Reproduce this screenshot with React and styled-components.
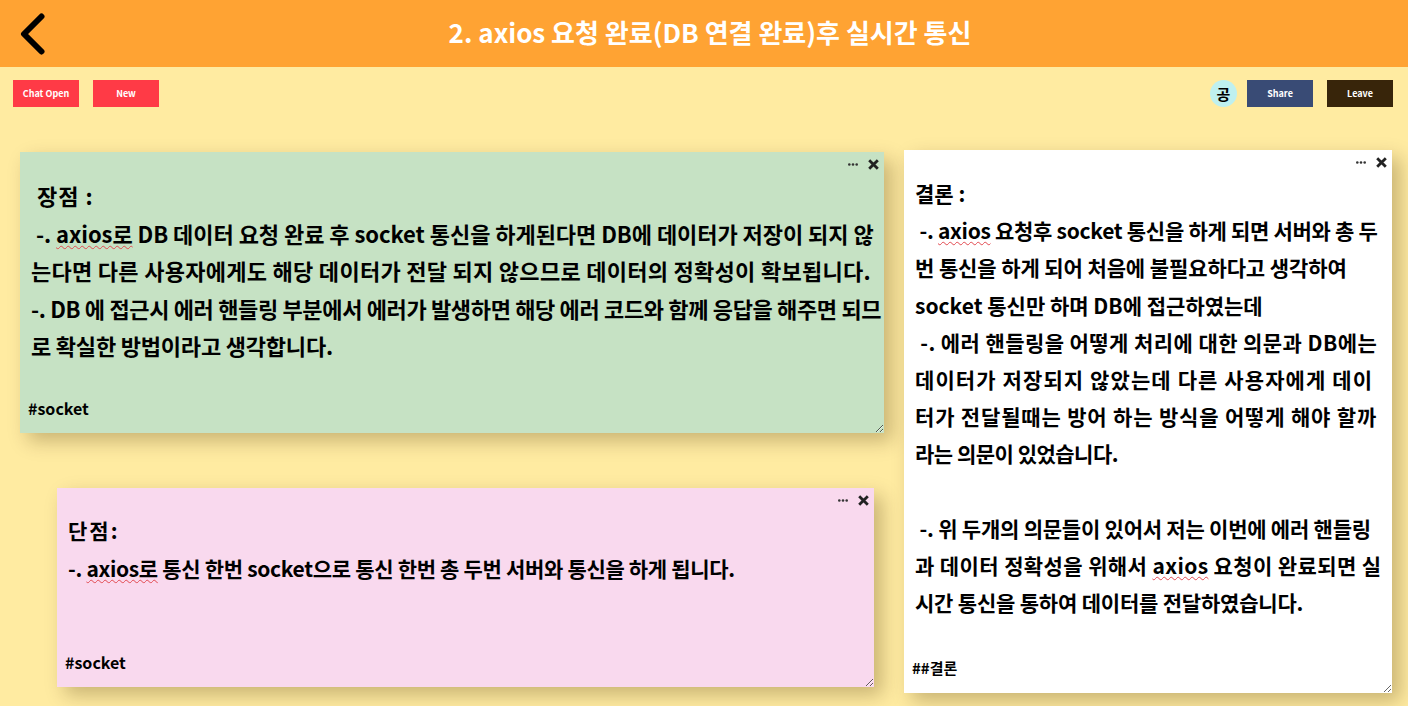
import React from 'react';
import styled, { createGlobalStyle } from 'styled-components';

// spacing = letter-spacing per line, the original font is a wider handwriting one
const notes = [
  {
    id: 'pros',
    left: 20, top: 152, width: 864, height: 281, color: '#c6e2c4',
    padTop: 25, size: 22, lineHeight: 37.6,
    tag: '#socket',
    spacing: [1, -0.05, 0.28, -0.35, -0.2],
    lines: [
      ' 장점 :',
      [' -. ', 'axios로', ' DB 데이터 요청 완료 후 socket 통신을 하게된다면 DB에 데이터가 저장이 되지 않'],
      '는다면 다른 사용자에게도 해당 데이터가 전달 되지 않으므로 데이터의 정확성이 확보됩니다.',
      '-. DB 에 접근시 에러 핸들링 부분에서 에러가 발생하면 해당 에러 코드와 함께 응답을 해주면 되므',
      '로 확실한 방법이라고 생각합니다.',
    ],
  },
  {
    id: 'cons',
    left: 57, top: 488, width: 817, height: 199, color: '#f9d9ee',
    padTop: 24, size: 21, lineHeight: 37.6,
    tag: '#socket',
    spacing: [2, -0.32],
    lines: [
      '단점:',
      ['-. ', 'axios로', ' 통신 한번 socket으로 통신 한번 총 두번 서버와 통신을 하게 됩니다.'],
    ],
  },
  {
    id: 'result',
    left: 904, top: 150, width: 488, height: 543, color: '#ffffff',
    padTop: 25, size: 21, lineHeight: 37.2,
    tag: '##결론',
    spacing: [0, -0.29, -0.1, 0, 0.42, 1.1, 0.82, -0.5, 0, -0.23, 0.39, -0.2],
    lines: [
      '결론 :',
      [' -. ', 'axios', ' 요청후 socket 통신을 하게 되면 서버와 총 두'],
      '번 통신을 하게 되어 처음에 불필요하다고 생각하여',
      'socket 통신만 하며 DB에 접근하였는데',
      ' -. 에러 핸들링을 어떻게 처리에 대한 의문과 DB에는',
      '데이터가 저장되지 않았는데 다른 사용자에게 데이',
      '터가 전달될때는 방어 하는 방식을 어떻게 해야 할까',
      '라는 의문이 있었습니다.',
      '\u00a0',
      ' -. 위 두개의 의문들이 있어서 저는 이번에 에러 핸들링',
      ['과 데이터 정확성을 위해서 ', 'axios', ' 요청이 완료되면 실'],
      '시간 통신을 통하여 데이터를 전달하였습니다.',
    ],
  },
];

const GlobalStyle = createGlobalStyle`
  html, body {
    margin: 0;
    padding: 0;
    height: 100%;
    overflow: hidden;
    background-color: #ffeba1;
    font-family: "Noto Sans CJK KR", "Noto Sans", sans-serif;
  }
`;

const Page = styled.div`
  width: 1408px;
  height: 706px;
  display: flex;
  flex-direction: column;
  overflow: hidden;
`;

const Header = styled.header`
  height: 67px;
  flex-shrink: 0;
  background-color: #ffa333;
  display: flex;
  align-items: center;
  justify-content: center;
  position: relative;
`;

const BackButton = styled.button`
  position: absolute;
  left: 20px;
  top: 13px;
  padding: 0;
  border: none;
  background: none;
  width: 28px;
  height: 42px;
`;

const Title = styled.h1`
  margin: 0 0 3px 12px;
  color: #fff;
  font-size: 26px;
  font-weight: 700;
  line-height: 64px;
`;

const Toolbar = styled.div`
  display: flex;
  justify-content: space-between;
  align-items: center;
  padding: 13px 15px 0 13px;
`;

const Group = styled.div`
  display: flex;
  align-items: center;
  gap: ${(p) => p.$gap}px;
`;

const ToolButton = styled.button`
  width: 66px;
  height: 27px;
  padding: 0;
  border: none;
  background-color: ${(p) => p.$color};
  color: #fff;
  font-family: inherit;
  font-size: 9px;
  font-weight: 700;
`;

const Avatar = styled.div`
  width: 27px;
  height: 27px;
  border-radius: 50%;
  background-color: #bff0ef;
  color: #000;
  font-size: 15px;
  font-weight: 700;
  display: flex;
  align-items: center;
  justify-content: center;
`;

const Note = styled.article`
  position: absolute;
  box-sizing: border-box;
  left: ${(p) => p.$left}px;
  top: ${(p) => p.$top}px;
  width: ${(p) => p.$width}px;
  height: ${(p) => p.$height}px;
  padding: ${(p) => p.$padTop}px 0 0 11px;
  background-color: ${(p) => p.$color};
  box-shadow: 8px 8px 18px rgba(60, 40, 0, 0.28);
  overflow: hidden;
  resize: both;
  color: #000;
`;

const NoteMenu = styled.div`
  position: absolute;
  top: 5px;
  right: 5px;
  display: flex;
  align-items: center;
  gap: 10px;
  height: 15px;
`;

const Line = styled.div`
  height: ${(p) => p.$lineHeight}px;
  line-height: ${(p) => p.$lineHeight}px;
  font-size: ${(p) => p.$size}px;
  font-weight: 700;
  letter-spacing: ${(p) => p.$spacing}px;
  white-space: pre;
`;

const Misspelled = styled.span`
  text-decoration: underline wavy #e2494f 1px;
  text-underline-offset: 2px;
`;

const Tag = styled.div`
  position: absolute;
  left: 8px;
  bottom: ${(p) => p.$bottom}px;
  font-size: ${(p) => p.$size}px;
  font-weight: 700;
`;

const BackIcon = () => (
  <svg width="28" height="42" viewBox="0 0 28 42" fill="none">
    <path d="M21.5 3.5 L4 21 L21.5 38.5" stroke="#000" strokeWidth="6" strokeLinecap="round" strokeLinejoin="round" />
  </svg>
);

const DotsIcon = () => (
  <svg width="10" height="3" viewBox="0 0 10 3" fill="#333">
    <circle cx="1.3" cy="1.5" r="1.3" />
    <circle cx="5" cy="1.5" r="1.3" />
    <circle cx="8.7" cy="1.5" r="1.3" />
  </svg>
);

const CloseIcon = () => (
  <svg width="11" height="11" viewBox="0 0 11 11" fill="none">
    <path d="M1.2 1.2 L9.8 9.8 M9.8 1.2 L1.2 9.8" stroke="#222" strokeWidth="2.8" />
  </svg>
);

const App = () => (
  <Page>
    <GlobalStyle />
    <Header>
      <BackButton><BackIcon /></BackButton>
      <Title>2. axios 요청 완료(DB 연결 완료)후 실시간 통신</Title>
    </Header>
    <Toolbar>
      <Group $gap={14}>
        <ToolButton $color="#ff3a46">Chat Open</ToolButton>
        <ToolButton $color="#ff3a46">New</ToolButton>
      </Group>
      <Group $gap={10}>
        <Avatar>공</Avatar>
        <Group $gap={14}>
          <ToolButton $color="#394b75">Share</ToolButton>
          <ToolButton $color="#38250a">Leave</ToolButton>
        </Group>
      </Group>
    </Toolbar>
    {notes.map((note) => (
      <Note
        key={note.id}
        $left={note.left}
        $top={note.top}
        $width={note.width}
        $height={note.height}
        $color={note.color}
        $padTop={note.padTop}
      >
        <NoteMenu><DotsIcon /><CloseIcon /></NoteMenu>
        {note.lines.map((line, i) => (
          <Line key={i} $size={note.size} $lineHeight={note.lineHeight} $spacing={note.spacing[i]}>
            {Array.isArray(line) ? (
              <>
                {line[0]}
                <Misspelled>{line[1]}</Misspelled>
                {line[2]}
              </>
            ) : line}
          </Line>
        ))}
        <Tag $size={note.id === 'result' ? 15 : 16} $bottom={note.id === 'result' ? 15 : 13}>{note.tag}</Tag>
      </Note>
    ))}
  </Page>
);

export default App;
